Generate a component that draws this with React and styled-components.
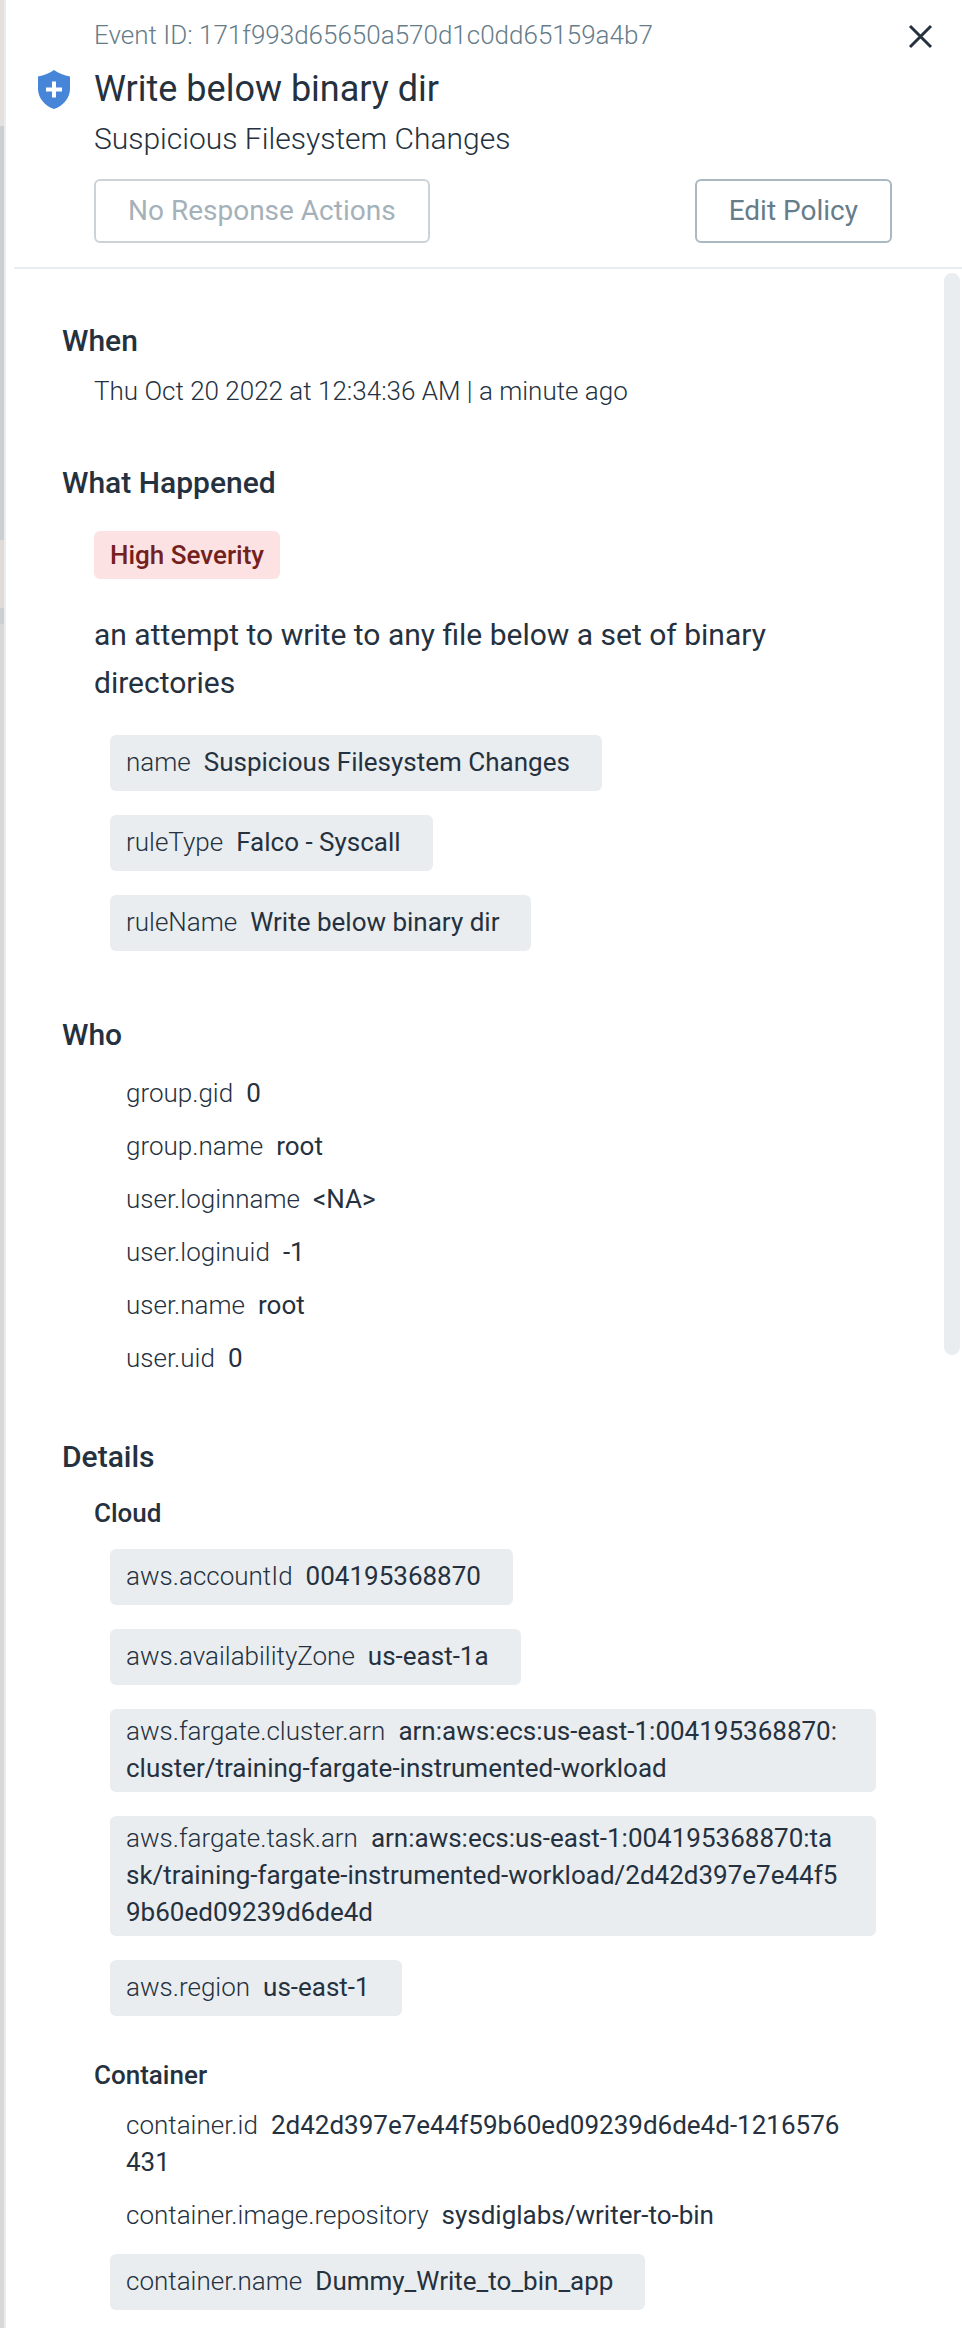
import React from "react";
import styled, { createGlobalStyle } from "styled-components";

const GlobalStyle = createGlobalStyle`
  *, *::before, *::after { box-sizing: border-box; }
  body {
    margin: 0;
    background: #fff;
    color: #25313e;
    font-family: Roboto, "Liberation Sans", sans-serif;
    font-size: 26px;
    line-height: 37px;
    font-weight: 300;
  }
  h1, h2, h3, p, dl, dd { margin: 0; }
`;

const Screen = styled.div`
  display: flex;
  min-height: 100vh;
`;

const Backdrop = styled.div`
  flex: none;
  width: 4px;
  background: linear-gradient(
    #e3e0de 0 126px, #cccfd1 126px 540px, #dedbd9 540px 608px,
    #cccfd1 608px 624px, #d9d8d8 624px
  );
`;

const Panel = styled.aside`
  flex: 1;
  min-width: 0;
  display: flex;
  flex-direction: column;
  padding-left: 8px;
  border-left: 2px solid #e9edf0;
  background: #fff;
`;

const Header = styled.header`
  display: grid;
  grid-template-columns: 80px 1fr 70px;
  padding: 16px 0 24px;
  border-bottom: 2px solid #e9edf0;
`;

const ShieldCell = styled.div`
  padding: 54px 0 0 24px;
  svg { display: block; }
`;

const EventId = styled.p`
  line-height: 38px;
  color: #667c89;
`;

const Title = styled.h1`
  margin-top: 7px;
  font-size: 36px;
  line-height: 56px;
  font-weight: 400;
`;

const Policy = styled.p`
  font-size: 30px;
  line-height: 44px;
`;

const Actions = styled.div`
  display: flex;
  justify-content: space-between;
  margin-top: 18px;
`;

const ActionButton = styled.button`
  height: 64px;
  padding: 0 32px;
  border: 2px solid #a9b8c1;
  border-radius: 6px;
  background: #fff;
  color: #667c89;
  font: 400 28px/40px Roboto, "Liberation Sans", sans-serif;
  &:disabled {
    border-color: #ccd3d8;
    color: #a5b1b9;
  }
`;

const CloseButton = styled.button`
  justify-self: start;
  align-self: start;
  margin-left: 8px;
  padding: 5px;
  border: 0;
  background: none;
  color: #25313e;
  svg { display: block; }
`;

const Body = styled.div`
  flex: 1;
  display: flex;
`;

const Content = styled.main`
  flex: 1;
  min-width: 0;
  padding: 52px 68px 9px 48px;
`;

const ScrollTrack = styled.div`
  flex: none;
  width: 18px;
  padding: 4px 2px 4px 0;
  display: flex;
  flex-direction: column;
  &::after { content: ""; flex: 17; }
`;

const ScrollThumb = styled.div`
  flex: 19;
  border-radius: 8px;
  background: #e9edf0;
`;

const Section = styled.section`
  margin-bottom: ${(p) => p.$space || 0}px;
`;

const SectionTitle = styled.h2`
  font-size: 30px;
  line-height: 40px;
  font-weight: 500;
`;

const Indented = styled.div`
  padding-left: 32px;
  padding-top: ${(p) => p.$top}px;
`;

const Severity = styled.span`
  display: block;
  width: fit-content;
  padding: 0 16px;
  border-radius: 6px;
  background: #fde2e3;
  color: #73211d;
  line-height: 48px;
  font-weight: 500;
`;

const Summary = styled.p`
  margin: 32px 0 24px;
  padding-right: 16px;
  font-size: 30px;
  line-height: 48px;
  font-weight: 400;
`;

const GroupTitle = styled.h3`
  margin-top: ${(p) => (p.$spaced ? 37 : 0)}px;
  margin-bottom: 13px;
  font-size: 26px;
  line-height: 37px;
  font-weight: 500;
`;

const Properties = styled.dl`
  display: flex;
  flex-direction: column;
  align-items: flex-start;
  gap: 16px;
  padding-left: 16px;
`;

const Property = styled.div`
  max-width: 100%;
  padding: 0 32px 0 16px;
  word-break: break-all;
  ${(p) =>
    p.$chip &&
    `
    margin: 4px 0;
    min-height: 56px;
    display: flex;
    align-items: center;
    padding-top: 4px;
    padding-bottom: 5px;
    border-radius: 6px;
    background: #e9edf0;
  `}
  dt, dd { display: inline; }
  dt { margin-right: 13px; }
  dd { font-weight: 400; }
`;

function Items({ rows }) {
  return (
    <Properties>
      {rows.map(([name, value, chip]) => (
        <Property key={name} $chip={chip}>
          <div>
            <dt>{name}</dt>
            <dd>{value}</dd>
          </div>
        </Property>
      ))}
    </Properties>
  );
}

const rule = [
  ["name", "Suspicious Filesystem Changes", true],
  ["ruleType", "Falco - Syscall", true],
  ["ruleName", "Write below binary dir", true],
];

const who = [
  ["group.gid", "0"],
  ["group.name", "root"],
  ["user.loginname", "<NA>"],
  ["user.loginuid", "-1"],
  ["user.name", "root"],
  ["user.uid", "0"],
];

const cloud = [
  ["aws.accountId", "004195368870", true],
  ["aws.availabilityZone", "us-east-1a", true],
  ["aws.fargate.cluster.arn", "arn:aws:ecs:us-east-1:004195368870:cluster/training-fargate-instrumented-workload", true],
  ["aws.fargate.task.arn", "arn:aws:ecs:us-east-1:004195368870:task/training-fargate-instrumented-workload/2d42d397e7e44f59b60ed09239d6de4d", true],
  ["aws.region", "us-east-1", true],
];

const container = [
  ["container.id", "2d42d397e7e44f59b60ed09239d6de4d-1216576431"],
  ["container.image.repository", "sysdiglabs/writer-to-bin"],
  ["container.name", "Dummy_Write_to_bin_app", true],
];

export default function App() {
  return (
    <>
      <GlobalStyle />
      <Screen>
        <Backdrop />
        <Panel>
          <Header>
            <ShieldCell>
              <svg width="32" height="39" viewBox="0 0 32 39" aria-hidden="true">
                <path d="M16 0C20.500 3 26 5.500 32 6.500V19C32 28 25 36 16 39 7 36 0 28 0 19V6.500C6 5.500 11.500 3 16 0Z" fill="#4785d8" />
                <path d="M16 11.500V27.500M8 19.500H24" stroke="#fff" strokeWidth="4" />
              </svg>
            </ShieldCell>
            <div>
              <EventId>Event ID: 171f993d65650a570d1c0dd65159a4b7</EventId>
              <Title>Write below binary dir</Title>
              <Policy>Suspicious Filesystem Changes</Policy>
              <Actions>
                <ActionButton disabled>No Response Actions</ActionButton>
                <ActionButton>Edit Policy</ActionButton>
              </Actions>
            </div>
            <CloseButton aria-label="Close">
              <svg width="32" height="32" viewBox="0 0 32 32" fill="none" stroke="currentColor" strokeWidth="3">
                <path d="M5 5 26 26M26 5 5 26" />
              </svg>
            </CloseButton>
          </Header>
          <Body>
            <Content>
              <Section $space={53}>
                <SectionTitle>When</SectionTitle>
                <Indented $top={12}>
                  <p>Thu Oct 20 2022 at 12:34:36 AM | a minute ago</p>
                </Indented>
              </Section>
              <Section $space={60}>
                <SectionTitle>What Happened</SectionTitle>
                <Indented $top={28}>
                  <Severity>High Severity</Severity>
                  <Summary>an attempt to write to any file below a set of binary directories</Summary>
                  <Items rows={rule} />
                </Indented>
              </Section>
              <Section $space={60}>
                <SectionTitle>Who</SectionTitle>
                <Indented $top={20}>
                  <Items rows={who} />
                </Indented>
              </Section>
              <Section>
                <SectionTitle>Details</SectionTitle>
                <Indented $top={18}>
                  <GroupTitle>Cloud</GroupTitle>
                  <Items rows={cloud} />
                  <GroupTitle $spaced>Container</GroupTitle>
                  <Items rows={container} />
                </Indented>
              </Section>
            </Content>
            <ScrollTrack>
              <ScrollThumb />
            </ScrollTrack>
          </Body>
        </Panel>
      </Screen>
    </>
  );
}
